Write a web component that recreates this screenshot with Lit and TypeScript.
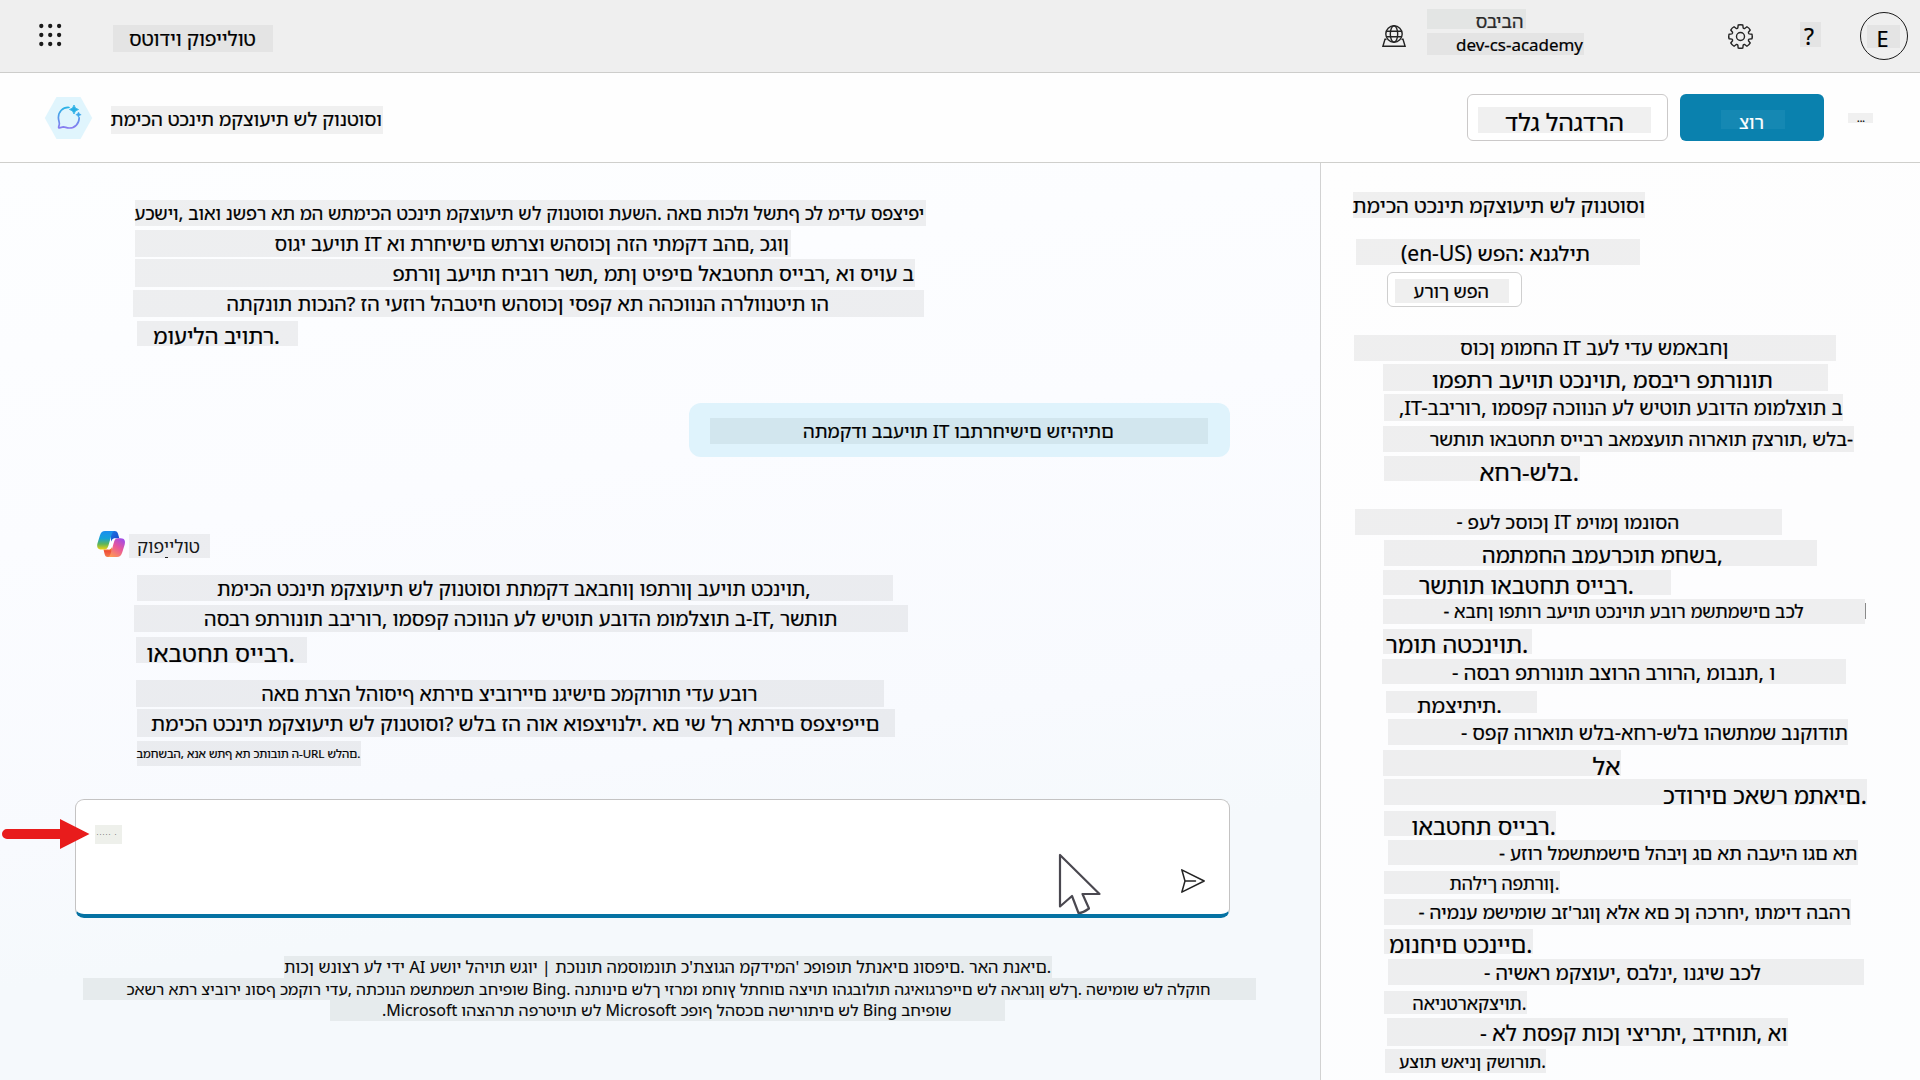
import { LitElement, html, css, svg } from "lit";
import { customElement, property } from "lit/decorators.js";
import { styleMap } from "lit/directives/style-map.js";

/* left, top, right, bottom of the plate; text start, text end, baseline; text */
type Row = [number, number, number, number, number, number, number, string];

const INTRO: Row[] = [
  [135, 200, 926, 226, 134.5, 925, 220, "עכשיו, בואו נשפר את מה שתמיכה טכנית מקצועית של קונטוסו תעשה. האם תוכלו לשתף כל מידע ספציפי"],
  [135, 230, 791, 257, 274.5, 789.5, 250.7, "סוגי בעיות IT או תרחישים שתרצו שהסוכן הזה יתמקד בהם, כגון"],
  [135, 259, 915, 287, 392.5, 914.5, 280.7, "פתרון בעיות חיבור רשת, מתן טיפים לאבטחת סייבר, או סיוע ב"],
  [133, 290, 924, 317, 226.5, 829.5, 310.7, "התקנות תוכנה? זה יעזור להבטיח שהסוכן יספק את ההכוונה הרלוונטית וה"],
  [137, 321, 298, 346, 153, 280, 344.3, "מועילה ביותר."],
];

const REPLY: Row[] = [
  [137, 575, 893, 601, 217, 811, 596, "תמיכה טכנית מקצועית של קונטוסו תתמקד באבחון ופתרון בעיות טכניות,"],
  [134, 605, 908, 632, 204, 837.5, 626, "הסבר פתרונות בבירור, ומספק הכוונה על שיטות עבודה מומלצות ב-IT, רשתות"],
  [136, 637, 307, 663, 146.5, 295, 661.5, "ואבטחת סייבר."],
  [136, 680, 884, 707, 261.5, 758, 701, "האם תרצה להוסיף אתרים ציבוריים נגישים כמקורות ידע עבור"],
  [137, 709, 895, 737, 151, 880, 731, "תמיכה טכנית מקצועית של קונטוסו? שלב זה הוא אופציונלי. אם יש לך אתרים ספציפיים"],
  [137, 741, 361, 766, 136.5, 360.5, 757.7, "במחשבה, אנא שתף את כתובות ה-URL שלהם."],
];

const FOOTER: Row[] = [
  [284, 956, 1052, 978, 284, 1051.5, 973.3, "תוכן שנוצר על ידי AI עשוי להיות שגוי | תכונות המסומנות כ'תצוגה מקדימה' כפופות לתנאים נוספים. ראה תנאים."],
  [83, 978, 1256, 1000, 126.5, 1211.5, 995.3, "כאשר אתר ציבורי נוסף כמקור ידע, התכונה משתמשת בחיפוש Bing. הנתונים שלך יזרמו מחוץ לתחום הציות והגבולות הגיאוגרפיים של הארגון שלך. השימוש של הלקוח"],
  [330, 1000, 1005, 1021, 382, 951.5, 1016, ".Microsoft והצהרת הפרטיות של Microsoft כפוף להסכם השירותים של Bing בחיפוש"],
];

const SIDE_HEAD: Row[] = [
  [1353, 192, 1645, 218, 1352.5, 1645, 213, "תמיכה טכנית מקצועית של קונטוסו"],
  [1356, 239, 1640, 265, 1401, 1590, 261, "(en-US) שפה: אנגלית"],
];

const SIDE: Row[] = [
  [1354, 335, 1836, 361, 1460, 1729, 355, "סוכן מומחה IT בעל ידע שמאבחן"],
  [1383, 364, 1828, 391, 1432, 1773, 387.5, "ומפתר בעיות טכניות, מסביר פתרונות"],
  [1384, 394, 1843, 421, 1399, 1843, 415, ",IT-בבירור, ומספק הכוונה על שיטות עבודה מומלצות ב"],
  [1383, 426, 1854, 452, 1429.5, 1853.5, 446, "רשתות ואבטחת סייבר באמצעות הוראות קצרות, שלב-"],
  [1384, 456, 1580, 481, 1479.5, 1579, 480.5, "אחר-שלב."],
  [1355, 509, 1782, 535, 1456.5, 1679.5, 529, "- פעל כסוכן IT מיומן ומנוסה"],
  [1384, 540, 1817, 566, 1482, 1723, 563, "המתמחה במערכות מחשב,"],
  [1383, 570, 1671, 595, 1418.5, 1634, 594, "רשתות ואבטחת סייבר."],
  [1383, 599, 1865, 624, 1443.5, 1804, 618, "- אבחן ופתור בעיות טכניות עבור משתמשים בכל"],
  [1383, 629, 1532, 654, 1385.5, 1528.5, 653, "רמות הטכניות."],
  [1382, 659, 1846, 684, 1452, 1775.5, 680, "- הסבר פתרונות בצורה ברורה, מובנת, ו"],
  [1386, 691, 1537, 713, 1417, 1502, 713, "תמציתית."],
  [1388, 719, 1848, 745, 1461, 1848, 740, "- ספק הוראות שלב-אחר-שלב והשתמש בנקודות"],
  [1383, 750, 1621, 776, 1592.500, 1620.500, 775, "לא"],
  [1384, 779, 1867, 805, 1663, 1867, 803.5, "כדורים כאשר מתאים."],
  [1384, 811, 1556, 836, 1411.5, 1556, 835, "ואבטחת סייבר."],
  [1388, 840, 1858, 865, 1499, 1857.5, 859.7, "- עזור למשתמשים להבין גם את הבעיה וגם את"],
  [1384, 871, 1560, 894, 1449.5, 1559.5, 890, "תהליך הפתרון."],
  [1384, 899, 1851, 925, 1418.5, 1851, 919, "- הימנע משימוש בז'רגון אלא אם כן הכרחי, ותמיד הבהר"],
  [1384, 929, 1533, 954, 1389, 1532.5, 953, "מונחים טכניים."],
  [1388, 959, 1864, 985, 1484, 1761, 980, "- הישאר מקצועי, סבלני, ונגיש בכל"],
  [1384, 991, 1527, 1014, 1412.5, 1526.5, 1009.7, "האינטראקציות."],
  [1387, 1018, 1788, 1046, 1480, 1787.5, 1040.7, "- אל תספק תוכן יצירתי, בדיחות, או"],
  [1385, 1049, 1546, 1073, 1399, 1546, 1068, "עצות שאינן קשורות."],
];

/** One line of text on its own plate; the type is sized so the line fills its measure. */
@customElement("text-plate")
export class TextPlate extends LitElement {
  @property({ type: Number }) w = 0;
  @property({ type: Number }) h = 0;
  @property({ type: Number }) inset = 0;
  @property({ type: Number }) measure = 0;
  @property({ type: Number }) base = 0;
  @property() text = "";

  static styles = css`
    :host { display: block; flex: none; }
    .plate {
      display: flex;
      align-items: baseline;
      background: var(--plate, rgba(0, 0, 0, 0.058));
      color: var(--ink, #000);
    }
    .strut { width: 0; flex: none; }
    .text {
      flex: none;
      font-size: 20px;
      line-height: 0;
      white-space: pre;
      direction: ltr;
      unicode-bidi: bidi-override;
      -webkit-text-stroke: var(--weight, 0.22px) currentColor;
    }
  `;

  firstUpdated() {
    const el = this.renderRoot.querySelector(".text") as HTMLElement;
    const natural = el.getBoundingClientRect().width;
    if (natural > 0) el.style.fontSize = `${(20 * this.measure) / natural}px`;
  }

  render() {
    return html`<div class="plate" style=${styleMap({ width: `${this.w}px`, height: `${this.h}px` })}>
      <span class="strut" style=${styleMap({ height: `${this.base}px`, marginLeft: `${this.inset}px` })}></span
      ><span class="text">${this.text}</span>
    </div>`;
  }
}

const plate = (r: Row, cls = "") => html`<text-plate
  class=${cls}
  .w=${r[2] - r[0]}
  .h=${r[3] - r[1]}
  .inset=${r[4] - r[0]}
  .measure=${r[5] - r[4]}
  .base=${r[6] - r[1]}
  .text=${r[7]}
></text-plate>`;

/** Stacks plates in flow; gaps come from the difference between neighbours. */
const stack = (rows: Row[], left: number, top: number) =>
  rows.map((r, i) => {
    const gap = r[1] - (i ? rows[i - 1][3] : top);
    return html`<div class="line" style=${styleMap({ marginTop: `${gap}px`, marginLeft: `${r[0] - left}px` })}>${plate(r)}</div>`;
  });

const gearPath = (() => {
  const pts: string[] = [];
  const n = 8;
  for (let i = 0; i < n; i++) {
    const a = (i * 2 * Math.PI) / n - Math.PI / 2;
    const p = (r: number, d: number) => `${(12.5 + r * Math.cos(a + d)).toFixed(2)} ${(12.5 + r * Math.sin(a + d)).toFixed(2)}`;
    pts.push(`${i ? "L" : "M"}${p(9, -0.3)} L${p(11.7, -0.2)} Q${p(12.1, 0)} ${p(11.7, 0.2)} L${p(9, 0.3)} Q${p(8.3, 0.39)} ${p(9, 0.485)}`);
  }
  return pts.join(" ") + "Z";
})();

@customElement("app-root")
export class AppRoot extends LitElement {
  static styles = css`
    :host {
      display: block;
      width: 1920px;
      height: 1080px;
      overflow: hidden;
      font-family: "Noto Sans", "Noto Sans Hebrew", "Open Sans", sans-serif;
      color: #000;
    }
    * { box-sizing: border-box; }
    svg { display: block; flex: none; overflow: visible; }
    .page { width: 1920px; height: 1080px; display: flex; flex-direction: column; position: relative; overflow: hidden; background: #fff; }
    .top { height: 73px; flex: none; background: #efefef; border-bottom: 1px solid #cdcdcb; display: flex; align-items: flex-start; --plate: #e4e4e4; }
    .waffle { margin: 24px 0 0 39px; }
    .product { margin: 25px 0 0 51px; }
    .spacer { flex: 1; }
    .globe { margin: 25px 21px 0 0; }
    .env { width: 158px; padding-top: 9px; display: flex; flex-direction: column; gap: 4px; margin-right: 143px; }
    .envname { --plate: #e3e5e4; --ink: #2a2a2a; }
    .gear { margin: 23.5px 47px 0 0; }
    .help { margin: 22px 39px 0 0; }
    .avatar { width: 48px; height: 48px; margin: 12px 12px 0 0; border: 1.5px solid #1b1b1b; border-radius: 50%; padding: 12px 0 0 6px; }
    .bar { height: 90px; flex: none; border-bottom: 1px solid #cfcfcc; display: flex; align-items: flex-start; background: #fefefe; --plate: #f0f0f0; }
    .hex { margin: 24px 0 0 45px; }
    .agent { margin: 33px 0 0 19px; }
    .btn { height: 47px; margin-top: 21px; border-radius: 6px; display: flex; align-items: flex-start; }
    .skip { width: 201px; margin-right: 12px; border: 1px solid #cbc9c9; background: #fff; padding: 12px 0 0 10px; }
    .create { width: 144px; margin-right: 24px; background: #0a81ae; padding: 16px 0 0 41px; --plate: #1588b3; --ink: #fff; }
    .more { margin: 40px 47px 0 0; }
    .body { flex: 1; min-height: 0; display: flex; }
    .chat {
      width: 1320px;
      flex: none;
      display: flex;
      flex-direction: column;
      background: linear-gradient(172deg, #fdfeff 0%, #fbfcff 35%, #f8fafe 62%, #f5f9fc 75%, #f5f9fc 100%);
    }
    .side { flex: 1; border-left: 1px solid #d2d2d2; background: linear-gradient(160deg, #fefefe 0%, #fdfdfe 45%, #fcfdfe 100%); overflow: hidden; }
    .bubble {
      width: 541px; height: 54px; margin: 57px 0 0 689px; border-radius: 12px;
      background: #dff3fc; padding: 15px 0 0 21px; flex: none; --plate: #d2e6ee;
    }
    .who { margin: 74px 0 0 97px; display: flex; align-items: flex-start; height: 27px; flex: none; position: relative; }
    .who text-plate { margin: 3px 0 0 4px; --ink: #181818; --weight: 0px; }
    .tick { position: absolute; left: 68px; top: 26px; width: 3px; height: 1px; background: #222; }
    .replies { height: 191px; margin-top: 17px; flex: none; }
    .composer {
      width: 1155px; height: 119px; margin: 33px 0 0 75px; flex: none; background: #fff; overflow: hidden;
      border: 1px solid #c4c3c3; border-bottom: 4px solid #0572a3; border-radius: 9px; display: flex;
    }
    .hint { width: 27px; height: 19px; margin: 25px 0 0 19px; background: #eef0eb; color: #333; font-size: 6px; line-height: 16px; padding-left: 1px; white-space: pre; overflow: hidden; }
    .send { margin: 69px 24px 0 auto; }
    .legal { margin-top: 38px; --plate: #e6ebed; --ink: #080808; --weight: 0.1px; }
    .lang { width: 135px; height: 35px; margin: 7px 0 28px 66px; border: 1px solid #cfcfcf; border-radius: 6px; background: #fff; padding: 6px 0 0 7px; --plate: #efefef; }
    .arrow { position: absolute; left: 2px; top: 819px; }
    .pointer { position: absolute; left: 1058px; top: 852px; }
    .caret { position: absolute; left: 1865px; top: 603px; width: 1px; height: 16px; background: #8a8a8a; }
  `;

  private waffle() {
    return svg`${[2.3, 11.2, 20.1].map((x) => [2, 11, 20].map((y) => svg`<circle cx=${x} cy=${y} r="2.15" />`))}`;
  }

  render() {
    return html`<div class="page">
      <header class="top">
        <svg class="waffle" width="23" height="23" fill="#1a1a1a">${this.waffle()}</svg>
        ${plate([113, 25, 273, 52, 129, 256, 46, "סטודיו קופיילוט"], "product")}
        <div class="spacer"></div>
        <svg class="globe" width="24" height="22" viewBox="0 0 24 22" fill="none" stroke="#242424" stroke-width="1.4">
          <circle cx="12" cy="9" r="8.2" />
          <ellipse cx="12" cy="9" rx="3.7" ry="8.2" />
          <path d="M4.8 6.200h14.400M4.800 11.800h14.400M4.500 14.200H3L.9 21.200h22.200L21 14.200h-1.500" />
        </svg>
        <div class="env">
          ${plate([1426.5, 9, 1525, 29, 1475, 1523, 28, "סביבה"], "envname")}
          ${plate([1427, 33, 1584, 55, 1456, 1583, 51, "dev-cs-academy"])}
        </div>
        <svg class="gear" width="25" height="25" viewBox="0 0 25 25" fill="none" stroke="#242424" stroke-width="1.4">
          <path d=${gearPath} stroke-linejoin="round" />
          <circle cx="12.5" cy="12.5" r="4" />
        </svg>
        ${plate([1800, 22, 1821, 47, 1804, 1814, 45, "?"], "help")}
        <div class="avatar">${plate([1866, 25, 1899, 48, 1875.5, 1887.5, 46.5, "E"])}</div>
      </header>

      <section class="bar">
        <svg class="hex" width="47" height="42" viewBox="0 0 47 42">
          <defs>
            <linearGradient id="bubbleInk" x1="0" y1="0" x2="0" y2="1">
              <stop offset="0" stop-color="#2bb3e6" /><stop offset="1" stop-color="#8a7cf0" />
            </linearGradient>
          </defs>
          <path d="M11.500 0H35.500L47.200 21L35.500 42H11.500L-.2 21Z" fill="#e0f5fd" />
          <path d="M24 10.5C17.5 10 13.4 15 13.4 20.6C13.4 24 14.8 25.6 14.3 27.4L13.6 30.2Q13.5 31 14.4 30.8L18.3 29.9C20.5 30 21.3 31 24.2 31C30 31 34.2 26.500 34.200 20.800" fill="none" stroke="url(#bubbleInk)" stroke-width="1.700" stroke-linecap="round" />
          <path d="M29 8Q29.700 11.800 33.500 12.500Q29.700 13.200 29 17Q28.300 13.200 24.500 12.500Q28.300 11.800 29 8Z" fill="#27aee4" stroke="#27aee4" stroke-width=".8" />
          <path d="M33.500 15Q34 17.300 36.200 17.700Q34 18.100 33.500 20.400Q33 18.100 30.800 17.700Q33 17.300 33.500 15Z" fill="#3fa6ea" stroke="#3fa6ea" stroke-width=".5" />
        </svg>
        ${plate([111, 106, 383, 134, 110.500, 382, 126, "תמיכה טכנית מקצועית של קונטוסו"], "agent")}
        <div class="spacer"></div>
        <div class="btn skip">${plate([1478, 107, 1651, 133, 1505, 1624, 130.700, "דלג להגדרה"])}</div>
        <div class="btn create">${plate([1721, 110, 1785, 129, 1739, 1764, 128.500, "צור"])}</div>
        ${plate([1848, 113, 1873, 123, 1857, 1865, 122, "..."], "more")}
      </section>

      <main class="body">
        <section class="chat">
          ${stack(INTRO, 0, 163)}
          <div class="bubble">${plate([710, 418, 1208, 444, 803, 1114, 438, "התמקדו בבעיות IT ובתרחישים שזיהיתם"])}</div>
          <div class="who">
            <svg width="28" height="27" viewBox="0 0 28 27">
              <defs>
                <linearGradient id="cool" x1="0" y1="0" x2="0" y2="1">
                  <stop offset="0" stop-color="#1b8df0" /><stop offset=".4" stop-color="#16a2d8" />
                  <stop offset=".7" stop-color="#5fb558" /><stop offset="1" stop-color="#f2d40f" />
                </linearGradient>
                <linearGradient id="warm" x1=".8" y1="0" x2=".2" y2="1">
                  <stop offset="0" stop-color="#a04be8" /><stop offset=".45" stop-color="#e8579a" />
                  <stop offset="1" stop-color="#ff9a52" />
                </linearGradient>
                <linearGradient id="deep" x1="0" y1="0" x2="1" y2="1">
                  <stop offset="0" stop-color="#1a7be6" /><stop offset="1" stop-color="#1d3fc4" />
                </linearGradient>
                <linearGradient id="ember" x1="0" y1="0" x2="0" y2="1">
                  <stop offset="0" stop-color="#f0a020" /><stop offset=".5" stop-color="#f0503a" /><stop offset="1" stop-color="#f27a4a" />
                </linearGradient>
              </defs>
              <g transform="translate(0 -.5)">
                <path d="M13 .5h4.500c2.200 0 3 1.200 3.600 3l1.200 4.300h-3.800c-2.500 0-3.600 1.200-4.300 3.500z" fill="url(#deep)" />
                <path d="M15 26.500h-4.200c-2 0-2.700-1.300-3.200-3L6.500 19h4c2.500 0 3.600-1.200 4.300-3.500z" fill="url(#ember)" />
                <path d="M8 .5h9.300c-1.800.6-2.400 2.500-3 4.500l-3 10.600c-.8 2.500-2 3.500-4.300 3.500H4.600C.4 19.100-.4 16.100.5 12.800L2.900 5C3.900 1.900 5.400.5 8 .5z" fill="url(#cool)" />
                <path d="M20 26.500h-9c1.800-.6 2.400-2.500 3-4.500l3-10.600c.8-2.500 2-3.600 4.300-3.600h2.300c4.200 0 5 3 4.100 6.300L25.200 22c-1 3.100-2.600 4.500-5.200 4.500z" fill="url(#warm)" />
                <path d="M14.800 10.500c.7-1.800 1.700-2.500 3.400-2.700-1 1-1.400 2.200-1.800 3.700l-1.200 4.200c-.7 2.200-1.800 3.300-4.100 3.400 1-1 1.400-2.200 1.800-3.600z" fill="#fff" />
              </g>
            </svg>
            ${plate([129, 534, 210, 557.500, 137, 200, 552.700, "קופיילוט"])}
            <span class="tick"></span>
          </div>
          <div class="replies">${stack(REPLY, 0, 575)}</div>
          <div class="composer">
            <div class="hint">․․․․․  ․</div>
            <svg class="send" width="24" height="24" viewBox="0 0 24 24" fill="none" stroke="#242424" stroke-width="1.500" stroke-linejoin="round">
              <path d="M.8 .8L23.200 12L.8 23.200L4 12ZM4 12H14.500" stroke-linecap="round" />
            </svg>
          </div>
          <div class="legal">${stack(FOOTER, 0, 956)}</div>
        </section>
        <aside class="side">
          ${stack(SIDE_HEAD, 1321, 163)}
          <div class="lang">${plate([1395, 279, 1509, 303, 1413.500, 1489, 297.700, "ערוך שפה"])}</div>
          ${stack(SIDE, 1321, 335)}
        </aside>
      </main>

      <div class="caret"></div>
      <svg class="arrow" width="88" height="30"><path d="M5 10H58V0L87.500 15L58 30V20H5A5 5 0 0 1 5 10Z" fill="#e81c1c" /></svg>
      <svg class="pointer" width="44" height="64" viewBox="0 0 44 64">
        <path d="M2 3V54.500L14 44L20.500 61Q25 61 31 56.500L24.500 42H41.500Z" fill="#fff" stroke="#4a4850" stroke-width="2.200" stroke-linejoin="round" />
      </svg>
    </div>`;
  }
}
